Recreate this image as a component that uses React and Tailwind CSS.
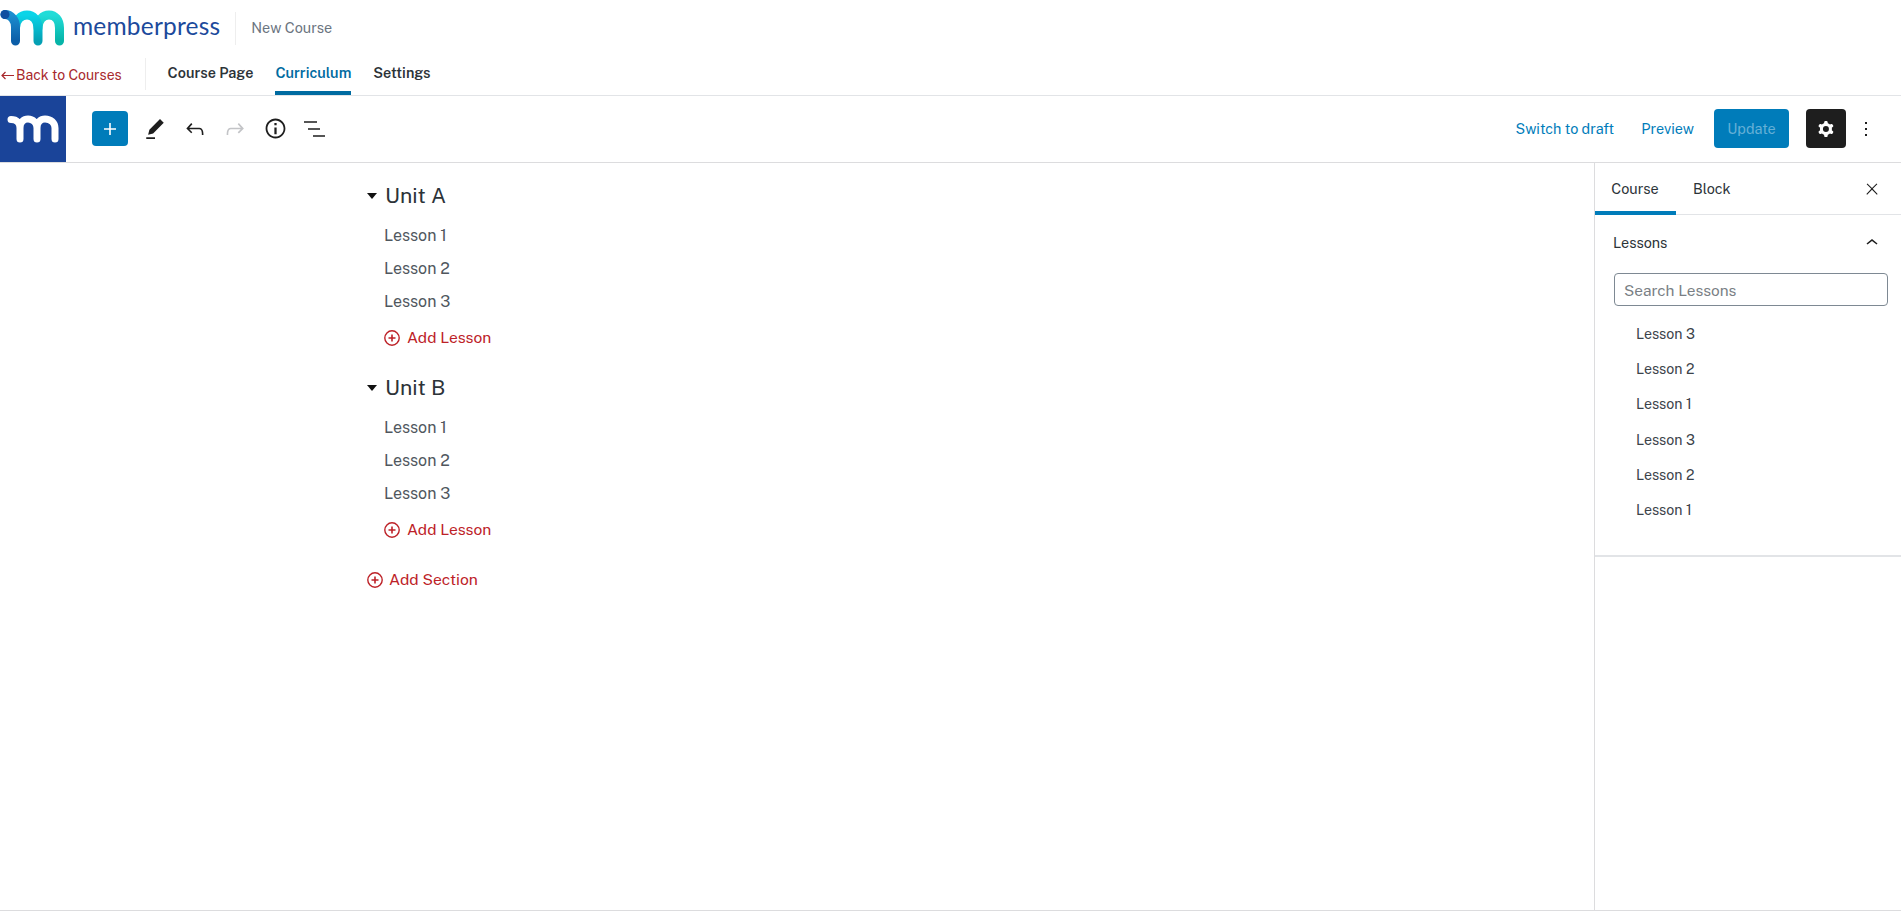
import { useState } from "react"

const Icon = ({ d, className = "w-6 h-6", evenodd }) => (
  <svg viewBox="0 0 24 24" className={className} fill="currentColor">
    <path d={d} fillRule={evenodd ? "evenodd" : undefined} clipRule={evenodd ? "evenodd" : undefined} />
  </svg>
)

const icons = {
  plus: "M18 11.2h-5.2V6h-1.6v5.2H6v1.6h5.2V18h1.6v-5.2H18z",
  pencil: "m19 7-3-3-8.5 8.5-1 4 4-1L19 7Zm-7 11.5H5V20h7v-1.5Z",
  undo: "M18.3 11.7c-.6-.6-1.4-.9-2.3-.9H6.7l2.9-3.3-1.1-1-4.5 5L8.5 16l1-1-2.7-2.7H16c.5 0 .9.2 1.3.5 1 1 1 3.4 1 4.5v.3h1.5v-.2c0-1.5 0-4.3-1.5-5.7z",
  redo: "M15.6 6.5l-1.1 1 2.9 3.3H8c-.9 0-1.7.3-2.3.9-1.4 1.5-1.4 4.2-1.4 5.6v.2h1.5v-.3c0-1.1 0-3.5 1-4.5.3-.3.7-.5 1.3-.5h9.2L14.5 15l1.1 1.1 4.6-4.6-4.6-5z",
  info: "M12 3.2c-4.8 0-8.8 3.9-8.8 8.8 0 4.8 3.9 8.8 8.8 8.8 4.8 0 8.8-3.9 8.8-8.8 0-4.8-4-8.8-8.8-8.8zm0 16c-4 0-7.2-3.3-7.2-7.2C4.8 8 8 4.8 12 4.8s7.2 3.3 7.2 7.2c0 4-3.2 7.2-7.2 7.2zM11 17h2v-6h-2v6zm0-8h2V7h-2v2z",
  list: "M1 4.25h13v1.5H1zM5 11.25h12v1.5H5zM10 18.25h12v1.5H10z",
  cog: "M10.289 4.836A1 1 0 0111.275 4h1.306a1 1 0 01.987.836l.244 1.466c.787.26 1.503.679 2.108 1.218l1.393-.522a1 1 0 011.216.437l.653 1.13a1 1 0 01-.23 1.273l-1.148.944a6.025 6.025 0 010 2.435l1.149.946a1 1 0 01.23 1.272l-.653 1.13a1 1 0 01-1.216.437l-1.394-.522c-.605.54-1.32.958-2.108 1.218l-.244 1.466a1 1 0 01-.987.836h-1.306a1 1 0 01-.986-.836l-.244-1.466a5.995 5.995 0 01-2.108-1.218l-1.394.522a1 1 0 01-1.217-.436l-.653-1.131a1 1 0 01.23-1.272l1.149-.946a6.026 6.026 0 010-2.435l-1.148-.944a1 1 0 01-.23-1.272l.653-1.131a1 1 0 011.217-.437l1.393.522a5.994 5.994 0 012.108-1.218l.244-1.466zM14.929 12a3 3 0 11-6 0 3 3 0 016 0z",
  kebab: "M13 19h-2v-2h2v2zm0-6h-2v-2h2v2zm0-6h-2V5h2v2z",
  close: "M13 11.8l6.1-6.3-1-1-6.1 6.2-6.1-6.2-1 1 6.1 6.3-6.5 6.7 1 1 6.5-6.6 6.5 6.6 1-1z",
  chevronUp: "M6.5 12.4L12 8l5.5 4.4-.9 1.2L12 10l-4.5 3.6-1-1.2z",
}

const Logo = () => (
  <svg viewBox="0 0 64 36" className="w-16 h-9" fill="none" strokeWidth="9" strokeLinecap="round">
    <defs>
      <linearGradient id="legA" x1="0" y1="0" x2="0" y2="1">
        <stop offset="0" stopColor="#1c8ed0" />
        <stop offset="1" stopColor="#0b5ea8" />
      </linearGradient>
      <linearGradient id="legB" x1="0" y1="0" x2="0" y2="1">
        <stop offset="0" stopColor="#0ad4e8" />
        <stop offset="1" stopColor="#04a0b4" />
      </linearGradient>
      <linearGradient id="legC" x1="0" y1="0" x2="0" y2="1">
        <stop offset="0" stopColor="#22dcd8" />
        <stop offset="1" stopColor="#06b4a8" />
      </linearGradient>
    </defs>
    <path d="M38 18C38 10 43 5 49 5C55 5 59.500 10 59.500 18V31" stroke="url(#legC)" />
    <path d="M15.500 18C15.500 10 21 5 27 5C33 5 38 10 38 18V31" stroke="url(#legB)" />
    <path d="M5 4.500C11 4.500 15.500 10 15.500 17V31" stroke="url(#legA)" />
    <circle cx="5" cy="4.500" r="4.500" fill="#0f4fa0" />
  </svg>
)

const WhiteLogo = () => (
  <svg viewBox="0 0 52 28" className="w-[52px] h-7" fill="none" stroke="#fff" strokeWidth="7" strokeLinecap="round">
    <path d="M4 4.500C10 4.500 13 8 13 13V24M13 13C13 7 17 4 21 4C26 4 30 8 30 13V24M30 13C30 7 34 4 38 4C44 4 48 8 48 13V24" />
  </svg>
)

const CirclePlus = () => (
  <svg viewBox="0 0 16 16" className="w-4 h-4" fill="none" stroke="currentColor" strokeWidth="1.400">
    <circle cx="8" cy="8" r="7.200" />
    <path d="M4.500 8h7M8 4.500v7" strokeWidth="1.600" />
  </svg>
)

const Section = ({ name }) => (
  <div className="mb-[21px]">
    <div className="flex items-center h-7">
      <span className="w-0 h-0 border-x-[5px] border-x-transparent border-t-[6px] border-t-[#111]" />
      <span className="ml-2 text-[21.300px] text-[#2c3338]">{name}</span>
    </div>
    <div className="mt-[9px] pl-[17px]">
      {["Lesson 1", "Lesson 2", "Lesson 3"].map((lesson) => (
        <div key={lesson} className="h-[33px] flex items-center text-[16px] text-[#50575e]">{lesson}</div>
      ))}
      <div className="flex items-center h-[30px] mt-[5px] text-[15.600px] text-[#bd2228]">
        <CirclePlus />
        <span className="ml-[7px]">Add Lesson</span>
      </div>
    </div>
  </div>
)

const App = () => {
  const [search, setSearch] = useState("")

  return (
    <div className="h-screen flex flex-col bg-white overflow-hidden font-['Public_Sans','Inter',sans-serif] border-b border-[#dcdcde]">
      <header className="h-12 pt-2 flex items-center shrink-0">
        <Logo />
        <span className="ml-[9px] text-[24.500px] leading-none text-[#1c4a9c] font-['Lato',sans-serif] tracking-[0.2px] pb-[3px]">memberpress</span>
        <div className="ml-[15px] w-px h-[33px] bg-[#eeeeee]" />
        <span className="ml-[15px] text-[14.400px] text-[#6b7480]">New Course</span>
      </header>

      <nav className="h-12 flex border-b border-[#e2e4e7] shrink-0">
        <a className="flex items-center text-[14px] text-[#a8282c] h-[47px] pt-[7px] pl-px">
          <svg viewBox="0 0 13 9" className="w-[13px] h-[9px] mr-[2px]" fill="none" stroke="currentColor" strokeWidth="1.200">
            <path d="M13 4.500H1M4.500 1L1 4.500L4.500 8" />
          </svg>
          Back to Courses
        </a>
        <div className="ml-[23px] mt-[10px] w-px h-8 bg-[#eeeeee]" />
        <div className="ml-[22px] flex gap-[22px] text-[14.400px] font-semibold text-[#2c3338]">
          <a className="h-full flex items-center pt-[7px] border-b-4 border-transparent">Course Page</a>
          <a className="h-full flex items-center pt-[7px] border-b-4 border-[#006ba1] text-[#006ba1]">Curriculum</a>
          <a className="h-full flex items-center pt-[7px] border-b-4 border-transparent">Settings</a>
        </div>
      </nav>

      <div className="h-[67px] flex items-center border-b border-[#dcdcde] shrink-0 pb-px">
        <div className="w-[66px] h-[66px] bg-[#1a4499] flex items-center justify-center"><WhiteLogo /></div>
        <button className="ml-[26px] w-9 h-[35px] bg-[#007cba] text-white rounded-sm flex items-center justify-center"><Icon d={icons.plus} /></button>
        <div className="ml-[7px] flex text-[#1e1e1e]">
          <span className="w-10 flex justify-center"><Icon d={icons.pencil} className="w-[30px] h-[30px]" /></span>
          <span className="w-10 flex justify-center items-center"><Icon d={icons.undo} className="w-[26px] h-[26px]" /></span>
          <span className="w-10 flex justify-center items-center text-[#c3c4c7]"><Icon d={icons.redo} className="w-[26px] h-[26px]" /></span>
          <span className="w-10 flex justify-center items-center"><Icon d={icons.info} className="w-[27px] h-[27px]" /></span>
          <span className="w-10 flex justify-center items-center"><Icon d={icons.list} /></span>
        </div>
        <div className="ml-auto flex items-center text-[14.400px] text-[#007cba]">
          <a>Switch to draft</a>
          <a className="ml-[27px]">Preview</a>
          <button className="ml-5 w-[75px] h-[39px] rounded-sm bg-[#007cba] text-[#66b0d6]">Update</button>
          <button className="ml-[17px] w-10 h-[39px] rounded-sm bg-[#1e1e1e] text-white flex items-center justify-center"><Icon d={icons.cog} evenodd /></button>
          <span className="ml-2 mr-[23px] text-[#1e1e1e]"><Icon d={icons.kebab} /></span>
        </div>
      </div>

      <div className="flex-1 flex min-h-0">
        <main className="flex-1 min-w-0">
          <div className="w-[860px] mx-auto pt-[19px]">
            <Section name="Unit A" />
            <Section name="Unit B" />
            <div className="flex items-center h-[30px] -mt-px text-[15.700px] text-[#bd2228]">
              <CirclePlus />
              <span className="ml-[6px]">Add Section</span>
            </div>
          </div>
        </main>

        <aside className="w-[307px] border-l border-[#dcdcde] shrink-0">
          <div className="h-[52px] flex items-stretch border-b border-[#e2e4e7] text-[14.400px] text-[#2c3338]">
            <button className="w-[81px] pt-1 border-b-4 border-[#007cba] -mb-px pr-px">Course</button>
            <button className="ml-[17px] pt-1 border-b-4 border-transparent -mb-px">Block</button>
            <span className="ml-auto mr-5 self-center text-[#1e1e1e]"><Icon d={icons.close} className="w-[18px] h-[18px]" /></span>
          </div>
          <section className="h-[342px] border-b-2 border-[#e2e4e7]">
            <div className="h-[55px] pl-[18px] pr-[17px] flex items-center justify-between text-[14.400px] text-[#2c3338]">
              <span>Lessons</span>
              <span className="text-[#1e1e1e]"><Icon d={icons.chevronUp} /></span>
            </div>
            <div className="mt-[3px] ml-[19px] w-[274px]">
              <input
                value={search}
                onChange={(e) => setSearch(e.target.value)}
                placeholder="Search Lessons"
                className="w-full h-[33px] px-[9px] text-[15.400px] border border-[#7e8993] rounded placeholder:text-[#7a7f85] outline-none"
              />
            </div>
            <div className="mt-[11px] pl-[41px]">
              {["Lesson 3", "Lesson 2", "Lesson 1", "Lesson 3", "Lesson 2", "Lesson 1"].map((lesson, i) => (
                <div key={i} className="h-[35.200px] flex items-center text-[14.200px] text-[#3c434a]">{lesson}</div>
              ))}
            </div>
          </section>
        </aside>
      </div>
    </div>
  )
}

export default App
